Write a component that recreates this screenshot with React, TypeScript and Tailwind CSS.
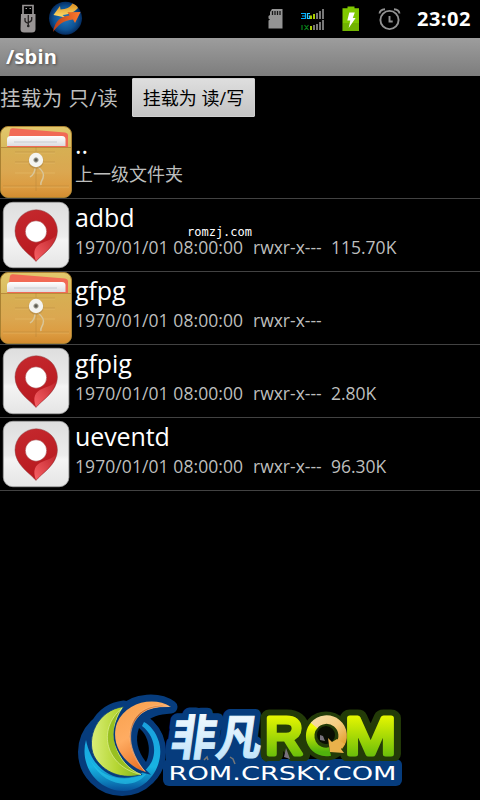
import React from "react";

const sans = "font-['Open_Sans','Noto_Sans','Noto_Sans_CJK_SC',sans-serif]";

function FolderIcon() {
  return (
    <svg className="h-[72px] w-[72px]" viewBox="0 0 72 72">
      <defs>
        <linearGradient id="fold" x1="0" y1="0" x2="0" y2="1">
          <stop offset="0" stopColor="#d6b053" />
          <stop offset="0.5" stopColor="#dba750" />
          <stop offset="0.82" stopColor="#dc9b40" />
          <stop offset="1" stopColor="#d38c30" />
        </linearGradient>
        <linearGradient id="foldTop" x1="0" y1="0" x2="0" y2="1">
          <stop offset="0" stopColor="#e2c86c" />
          <stop offset="1" stopColor="#c0983d" />
        </linearGradient>
        <linearGradient id="sheet" x1="0" y1="0" x2="0" y2="1">
          <stop offset="0" stopColor="#fff" />
          <stop offset="1" stopColor="#dcdce0" />
        </linearGradient>
      </defs>
      <rect x="0.5" y="0.5" width="71" height="71" rx="7.5" fill="url(#foldTop)" stroke="#a98132" />
      <path d="M10 4q.5-2 3-1.700L65 6.500q3 .5 3 3V22H7Z" fill="#f16a55" />
      <path d="M7 20V13.500q0-3.500 3.500-3.500H62q3.500 0 3.500 3.500V20Z" fill="url(#sheet)" />
      <path d="M14 16h43" stroke="#c8cbd2" strokeWidth="1.200" />
      <path d="M1 21h70v42q0 8-8 8H9q-8 0-8-8Z" fill="url(#fold)" />
      <path d="M1 21.500h70" stroke="#b98c3c" />
      <path d="M3 61h66M15 27h40M15 37h40M15 47h40" stroke="#edc777" strokeWidth="0.800" opacity=".5" />
      <path d="M3 60h66M36 21v44M15 26h40M15 36h13M44 36h11" stroke="#a87a35" strokeWidth="0.700" opacity=".45" />
      <path d="M35 42c0 5-2 7-5 9M38 41c4 3 7 6 5 11-1 3-3 4-2 7" fill="none" stroke="#d9c69a" strokeWidth="1.500" />
      <circle cx="36" cy="35" r="7.700" fill="#aa8140" opacity=".55" />
      <circle cx="36" cy="34" r="7.200" fill="#f4f4f0" />
      <circle cx="36" cy="34" r="2.200" fill="#5d5c55" stroke="#aaa99b" />
    </svg>
  );
}

function PinIcon() {
  return (
    <svg className="h-[72px] w-[72px]" viewBox="0 0 72 72">
      <defs>
        <linearGradient id="tile" x1="0" y1="0" x2="0" y2="1">
          <stop offset="0" stopColor="#dedede" />
          <stop offset="0.52" stopColor="#ececec" />
          <stop offset="0.58" stopColor="#f4f4f4" />
          <stop offset="1" stopColor="#e5e5e5" />
        </linearGradient>
        <linearGradient id="pin" x1="0" y1="0" x2="0.3" y2="1">
          <stop offset="0" stopColor="#c5292e" />
          <stop offset="1" stopColor="#b8191f" />
        </linearGradient>
        <linearGradient id="fold2" x1="1" y1="0" x2="0" y2="1">
          <stop offset="0" stopColor="#bf252b" />
          <stop offset="1" stopColor="#f86267" />
        </linearGradient>
      </defs>
      <rect x="3.300" y="3.300" width="65.600" height="65.400" rx="9.500" fill="url(#tile)" stroke="#a4a4a4" strokeWidth="0.800" />
      <path d="M36 62.500C31 56 15 47 15 32a21.200 21.200 0 0 1 42.400 0C57.400 47 41 56 36 62.500Z" fill="url(#pin)" stroke="#8f4547" strokeWidth="0.500" />
      <path d="M36 62c-3.500-9-1.500-15.500 7-18.500 6.500-2.500 10.500-4 13.500-7.500C53 49 41 56 36 62Z" fill="url(#fold2)" />
      <circle cx="36" cy="32.500" r="10.700" fill="#fff" stroke="#9b3438" strokeWidth="0.500" />
    </svg>
  );
}

function StatusBar() {
  return (
    <header className="flex h-[38px] shrink-0 items-center">
      <svg className="ml-[19px] h-[38px] w-[18px]" viewBox="19 0 18 38">
        <path d="M23 14V5.500h10V14" fill="none" stroke="#989494" strokeWidth="1.700" />
        <path d="M25.500 8.500h1.500M29.500 8.500h1.500" stroke="#aaa" />
        <path d="M21 14h14.500v15q0 3.500-3.500 3.500h-8q-3.500 0-3.500-3.500Z" fill="#989494" />
        <path d="M28.300 27V15M25 18v2.500q0 2 3.300 2.800M31.700 17v2.500q0 2-3.400 3" fill="none" stroke="#252222" strokeWidth="1.300" />
        <circle cx="28.300" cy="26" r="1.300" fill="#222" />
      </svg>
      <svg className="ml-[10px] h-[38px] w-[37px]" viewBox="47 0 37 38">
        <defs>
          <radialGradient id="ball">
            <stop offset="0" stopColor="#237bc1" />
            <stop offset="0.7" stopColor="#0d5294" />
            <stop offset="1" stopColor="#052c60" />
          </radialGradient>
          <linearGradient id="gold" x1="0" y1="0" x2="0" y2="1">
            <stop offset="0" stopColor="#d98c20" />
            <stop offset="1" stopColor="#ffe06a" />
          </linearGradient>
          <linearGradient id="flame">
            <stop offset="0" stopColor="#b93d18" />
            <stop offset="1" stopColor="#ff7b2d" />
          </linearGradient>
        </defs>
        <circle cx="65.500" cy="18.200" r="16.500" fill="url(#ball)" />
        <path d="M53.500 15l6.500-9 .5 3.500c6-.5 9-1.500 12-6 3 1 5 2.800 5.500 4.500-4 4.500-9 6.500-15.500 7l3 2.500Z" fill="url(#gold)" />
        <path d="M53 32c2-11 8-16 16.500-16.500l-2-3.300L80.500 12 75 23l-2-3.500C64 20 58 25 53 32Z" fill="url(#flame)" />
      </svg>
      <svg className="ml-auto h-[38px] w-[140px]" viewBox="264 0 140 38">
        <path d="M272 9h10.500v19.500h-14v-8l1.500-1-1.500-1V16l1.500-1v-3Z" fill="#949494" />
        <path d="M272.500 11v4M275 11v4M277.500 11v4M280 11v4" stroke="#161616" strokeWidth="1.300" />
        <path d="M301 13.500h4.500v5H301M302 16h3.500" fill="none" stroke="#00aeff" strokeWidth="1.200" />
        <path d="M310 13.500h-2.500v5h2.200V16h-1" fill="none" stroke="#2dc9ff" strokeWidth="1.200" />
        <path d="M302 25v5M304.500 25l4 5M308.500 25l-4 5" fill="none" stroke="#08831a" strokeWidth="1.200" />
        <path d="M311 19v-3.500M314 19v-5M311 30v-4" stroke="#aacd00" strokeWidth="2" />
        <path d="M317 19v-6M320 19v-8M323 19V9M314 30v-5M317 30v-6M320 30v-8M323 30V20" stroke="#777" strokeWidth="2" />
        <path d="M342.500 8.300h5V6.500h7v1.800H359V31h-16.500Z" fill="#80c800" />
        <path d="M343 23h16v8h-16Z" fill="#69a700" opacity=".65" />
        <path d="M349.300 12.500h5.500l-2 5.500h2.800l-6.900 10 1.600-7.500h-3Z" fill="#fff" />
        <g fill="none" stroke="#929292" strokeWidth="1.900">
          <circle cx="389.500" cy="20" r="9.100" />
          <path d="M389.500 16v5.500h3.200M379.500 13.500q.5-4 5.500-4.300M399.500 13.500q-.5-4-5.500-4.300" />
        </g>
      </svg>
      <time className="ml-[13px] mr-[7px] w-[56px] whitespace-nowrap text-[20px] leading-[38px] font-bold tracking-[0.500px] text-white">23:02</time>
    </header>
  );
}

const entries = [
  { name: "..", detail: "上一级文件夹", folder: true },
  { name: "adbd", detail: "1970/01/01 08:00:00", perms: "rwxr-x---", size: "115.70K", folder: false },
  { name: "gfpg", detail: "1970/01/01 08:00:00", perms: "rwxr-x---", size: "", folder: true },
  { name: "gfpig", detail: "1970/01/01 08:00:00", perms: "rwxr-x---", size: "2.80K", folder: false },
  { name: "ueventd", detail: "1970/01/01 08:00:00", perms: "rwxr-x---", size: "96.30K", folder: false },
];

function Logo() {
  return (
    <svg className="mt-auto ml-[70px] h-[110px] w-[340px] shrink-0" viewBox="70 690 340 110">
      <defs>
        <linearGradient id="ice" x1="0" y1="0" x2="0" y2="1">
          <stop offset="0" stopColor="#fff" />
          <stop offset="1" stopColor="#b9e1fa" />
        </linearGradient>
        <linearGradient id="lime" x1="0" y1="0" x2="0" y2="1">
          <stop offset="0.1" stopColor="#effa00" />
          <stop offset="1" stopColor="#50b20c" />
        </linearGradient>
        <linearGradient id="leaf">
          <stop offset="0" stopColor="#d9ee78" />
          <stop offset="0.5" stopColor="#b5d633" />
          <stop offset="1" stopColor="#7fb21c" />
        </linearGradient>
        <linearGradient id="orange" x1="0" y1="0" x2="0.5" y2="1">
          <stop offset="0" stopColor="#f8a04c" />
          <stop offset="0.5" stopColor="#ffac62" />
          <stop offset="1" stopColor="#e56c20" />
        </linearGradient>
        <linearGradient id="rust" x1="1" y1="0" x2="0.3" y2="1">
          <stop offset="0" stopColor="#f49b4c" />
          <stop offset="0.55" stopColor="#b85a1c" />
          <stop offset="1" stopColor="#dd6618" />
        </linearGradient>
        <linearGradient id="cyan" x1="0" y1="0" x2="0" y2="1">
          <stop offset="0" stopColor="#19a0de" />
          <stop offset="0.65" stopColor="#18b2e2" />
          <stop offset="0.85" stopColor="#0e83bd" />
          <stop offset="1" stopColor="#07509a" />
        </linearGradient>
        <linearGradient id="peach" x1="0" y1="0" x2="1" y2="1">
          <stop offset="0" stopColor="#f5dba0" />
          <stop offset="0.5" stopColor="#f6cc80" />
          <stop offset="1" stopColor="#e2a030" />
        </linearGradient>
      </defs>

      <g fill="#063c7d" stroke="#063c7d" strokeWidth="13" strokeLinejoin="round">
        <path d="M124 707C99 710 87 736 95 756C103 772 121 779 141 775L145 771C154 765 160 753 157 741C155 732 150 727 143 723L138 720C148 710 158 708 171 707C159 698 135 699 124 711Z" />
        <circle cx="122" cy="752" r="34" fill="none" strokeWidth="20" />
      </g>
      <path d="M139 728C148 735 152 750 146 762C137 751 135 739 139 728Z" fill="#000" />
      <path d="M86 740C79 765 97 791 124 791C150 790 165 763 159 742C156 732 150 725 144 722L142 726C153 734 157 749 152 761C140 787 95 785 86 740Z" fill="url(#cyan)" />
      <path d="M89 757C98 778 125 784 147 773C134 792 100 786 89 757Z" fill="#27c5e9" opacity=".65" />
      <path d="M124 706.500C97 710 86 738 94 756C103 773 123 780 142 774.500C114 764 106 728 124 706.500Z" fill="url(#leaf)" stroke="#063c7d" strokeWidth=".8" />
      <path d="M122 708C96 730 106 767 141 774.500C115 764 106 731 122 708Z" fill="#98c021" stroke="#e2f09a" strokeWidth=".7" />
      <path d="M171 707C154 696 126 702 117 723C109 746 127 767 146 772C128 754 123 726 142 713C150 707 162 706 171 707Z" fill="url(#orange)" stroke="#063c7d" strokeWidth="3" paintOrder="stroke" />
      <path d="M162 705C126 706 120 745 145 771.500C128 751 125 727 142 713Q151 706 169 706.500Z" fill="url(#rust)" stroke="#ffc99a" strokeWidth=".5" />

      <rect x="163" y="759" width="239" height="27" rx="6" fill="#063c7d" />
      <path d="M166 745h94v20h-94Z" fill="#063c7d" />
      <text x="0" y="0" transform="translate(169 755) skewX(-8)" textLength="91" lengthAdjust="spacingAndGlyphs" className="font-['Noto_Sans_CJK_SC',sans-serif]" fontSize="48" fontWeight="900" fill="#063c7d" stroke="#063c7d" strokeWidth="13" strokeLinejoin="round">非凡</text>

      <g className="font-['Liberation_Sans',sans-serif]" fontSize="52" strokeLinejoin="round">
        <g fill="#233b08" stroke="#233b08" strokeWidth="17">
          <text x="265" y="754" textLength="39" lengthAdjust="spacingAndGlyphs">R</text>
          <circle cx="326" cy="736" r="16" fill="none" />
          <text x="345" y="754" textLength="51" lengthAdjust="spacingAndGlyphs">M</text>
        </g>
        <g fill="url(#lime)" stroke="url(#lime)" strokeWidth="5">
          <text x="265" y="754" textLength="38" lengthAdjust="spacingAndGlyphs">R</text>
          <text x="345" y="754" textLength="51" lengthAdjust="spacingAndGlyphs">M</text>
        </g>
      </g>
      <text x="0" y="0" transform="translate(169 755) skewX(-8)" textLength="91" lengthAdjust="spacingAndGlyphs" className="font-['Noto_Sans_CJK_SC',sans-serif]" fontSize="48" fontWeight="700" fill="url(#ice)" stroke="url(#ice)" strokeWidth="1">非凡</text>
      <circle cx="326" cy="735" r="9" fill="#090d03" />
      <path d="M320 740v-5l3 1 2 5M284 757l2-9 4 11Z" fill="#77727b" />
      <path d="M315 724.500A16 16 0 0 0 330 751.500" fill="none" stroke="url(#lime)" strokeWidth="8.500" />
      <path d="M314 725.500A16 16 0 0 1 339 746" fill="none" stroke="url(#peach)" strokeWidth="8.500" />
      <path d="M328 738l2 14 14 1-3-4 4-5-8-5-5 3Z" fill="#e9b14b" />
      <rect x="264" y="761" width="137" height="23" rx="5" fill="#063c7d" />
      <text x="168.500" y="780" textLength="228" lengthAdjust="spacingAndGlyphs" className="font-['DejaVu_Sans',sans-serif]" fontSize="19" fill="white">ROM.CRSKY.COM</text>
      <path d="M204 760l3-3 1 3M230 757l3 2 2 5" fill="none" stroke="#777" strokeWidth="1.500" />
    </svg>
  );
}

export default function App() {
  return (
    <main className={`relative flex h-[800px] w-[480px] flex-col overflow-hidden bg-black ${sans}`}>
      <StatusBar />
      <h1 className="h-[38px] shrink-0 bg-linear-to-b from-[#9d9d9d] to-[#7d7d7d] pl-[6px] text-[20px] leading-[37px] font-bold tracking-[0.200px] text-white [text-shadow:1px_1px_3px_#444]">/sbin</h1>
      <div className="flex h-[50px] shrink-0 items-start">
        <span className="w-[132px] whitespace-pre text-[20.500px] leading-[44px] tracking-[0.400px] text-[#bdbebd]">挂载为 只/读</span>
        <button className="mt-[2px] h-[39px] w-[123px] whitespace-pre rounded-[1px] border border-[#cfcfcf] bg-linear-to-b from-[#dedede] to-[#c4c4c4] text-[18px] leading-[39px] text-black">挂载为 读/写</button>
      </div>
      <ul>
        {entries.map((e) => (
          <li key={e.name} className="flex h-[73px] border-b border-[#424242]">
            {e.folder ? <FolderIcon /> : <PinIcon />}
            <div className="ml-[3px] whitespace-nowrap">
              <div className="mt-[2px] h-[33px] text-[25px] leading-[33px] tracking-[-0.100px] text-white">{e.name}</div>
              <div className="flex h-[26px] items-center text-[17.500px] leading-[26px] text-[#bdbebd]">
                <span className={e.perms ? "w-[178px] tracking-[0.080px]" : "text-[18px]"}>{e.detail}</span>
                <span className="w-[78px]">{e.perms}</span>
                <span>{e.size}</span>
              </div>
            </div>
          </li>
        ))}
      </ul>
      <Logo />
      <span className="absolute top-[226px] left-[187px] font-['DejaVu_Sans_Mono',monospace] text-[12px] leading-[12px] text-white">romzj.com</span>
    </main>
  );
}
